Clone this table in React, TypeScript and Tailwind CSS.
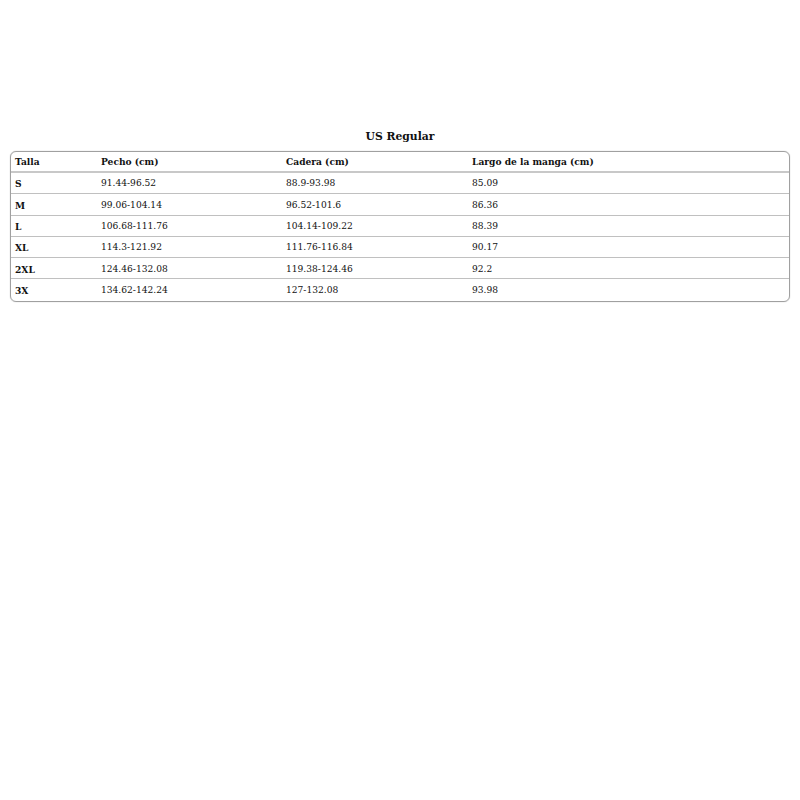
import React from "react";

const rows = [
  ["S", "91.44-96.52", "88.9-93.98", "85.09"],
  ["M", "99.06-104.14", "96.52-101.6", "86.36"],
  ["L", "106.68-111.76", "104.14-109.22", "88.39"],
  ["XL", "114.3-121.92", "111.76-116.84", "90.17"],
  ["2XL", "124.46-132.08", "119.38-124.46", "92.2"],
  ["3X", "134.62-142.24", "127-132.08", "93.98"],
];

export default function App() {
  return (
    <div className="w-[800px] h-[800px] bg-white px-[10px] pt-[129px] text-[#111]" style={{ fontFamily: '"DejaVu Serif", serif' }}>
      <div className="text-center font-bold text-[10.8px] leading-[16px]">US Regular</div>
      <div className="mt-[6px] border border-[#a0a0a0] rounded-[6px] overflow-hidden text-[9.1px] shadow-[0_0_1px_rgba(0,0,0,0.35)]">
        <div className="grid grid-cols-[86px_185px_186px_1fr] h-[21px] items-center font-bold border-b-2 border-[#c8c8c8]">
          <div className="pl-[4px]">Talla</div>
          <div className="pl-[4px]">Pecho (cm)</div>
          <div className="pl-[4px]">Cadera (cm)</div>
          <div className="pl-[4px]">Largo de la manga (cm)</div>
        </div>
        {rows.map((r, i) => (
          <div key={i} className={`grid grid-cols-[86px_185px_186px_1fr] h-[21.3px] pt-[2px] items-center ${i < rows.length - 1 ? "border-b border-[#c0c0c0]" : ""}`}>
            <div className="pl-[4px] font-bold">{r[0]}</div>
            <div className="pl-[4px]">{r[1]}</div>
            <div className="pl-[4px]">{r[2]}</div>
            <div className="pl-[4px]">{r[3]}</div>
          </div>
        ))}
      </div>
    </div>
  );
}
